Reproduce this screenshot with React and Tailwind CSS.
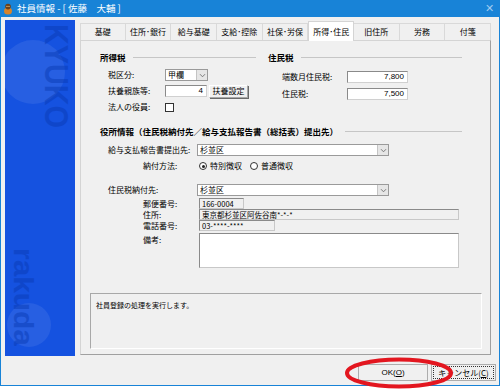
import React from 'react';

const Chevron = () => (
  <svg width="7" height="5" viewBox="0 0 7 5">
    <path d="M1 1.2 L3.5 3.8 L6 1.2" fill="none" stroke="#707070" strokeWidth="0.9" />
  </svg>
);

const Select = ({ className, value }) => (
  <div className={`flex h-[12px] bg-white border border-[#9a9a9a] ${className}`}>
    <div className="flex-1 pl-[2px] text-[8px] leading-[10px]">{value}</div>
    <div className="w-[11px] flex items-center justify-center bg-[#e6e6e6] border-l border-[#c4c4c4]">
      <Chevron />
    </div>
  </div>
);

const NumInput = ({ className, value }) => (
  <div className={`h-[12px] bg-white border border-[#8a8a8a] border-r-[#d0d0d0] border-b-[#d0d0d0] text-right pr-[3px] text-[8px] leading-[10px] font-['Liberation_Sans',sans-serif] ${className}`}>
    {value}
  </div>
);

const ReadInput = ({ className, value }) => (
  <div className={`h-[11px] bg-[#f0f0f0] border border-[#8a8a8a] border-r-[#c8c8c8] border-b-[#c8c8c8] pl-[2px] text-[7.5px] leading-[9px] ${className}`}>
    {value}
  </div>
);

const Header = ({ title, lineClass }) => (
  <div className="flex items-center h-[12px]">
    <span className="font-bold text-[8.5px] leading-none">{title}</span>
    <div className={`flex-1 ml-[7px] h-px bg-[#c6c6c6] ${lineClass}`} />
  </div>
);

const Radio = ({ checked, label }) => (
  <div className="flex items-center gap-[3px]">
    <span className="w-[8px] h-[8px] rounded-full border border-[#333] bg-white flex items-center justify-center">
      {checked && <span className="w-[3px] h-[3px] rounded-full bg-[#222]" />}
    </span>
    <span>{label}</span>
  </div>
);

const tabs = ['基礎', '住所･銀行', '給与基礎', '支給･控除', '社保･労保', '所得･住民', '旧住所', '労務', '付箋'];

const SidePanel = () => (
  <svg width="70" height="336" viewBox="0 0 70 336" className="block">
    <rect width="70" height="336" fill="#1552e0" />
    <circle cx="28" cy="52" r="32" fill="#ffffff" opacity="0.08" />
    <text
      transform="translate(40,4) rotate(90)"
      fontFamily="Liberation Sans"
      fontWeight="bold"
      fontSize="34"
      textLength="104"
      lengthAdjust="spacingAndGlyphs"
      fill="#0b3cb5"
      opacity="0.5"
    >
      KYUKO
    </text>
    <circle cx="24" cy="305" r="22" fill="#ffffff" opacity="0.08" />
    <text
      transform="translate(9,228) rotate(90)"
      fontFamily="Liberation Sans"
      fontWeight="bold"
      fontSize="28"
      textLength="98"
      lengthAdjust="spacingAndGlyphs"
      fill="#0b3cb5"
      opacity="0.5"
    >
      rakuda
    </text>
  </svg>
);

export default function App() {
  return (
    <div className="relative w-[500px] h-[390px] bg-white text-black font-['Noto_Sans_CJK_JP','Noto_Sans',sans-serif] overflow-hidden">
      <div className="w-[500px] h-[386px] bg-[#f0f0f0] border-x border-b border-[#1883d7] flex flex-col">
        {/* title bar */}
        <div className="h-[17px] bg-[#1883d7] flex items-center -mx-px">
          <svg width="10" height="12" viewBox="0 0 10 12" className="ml-[3px]">
            <ellipse cx="5" cy="8" rx="4" ry="3.6" fill="#d8842a" />
            <circle cx="5" cy="3.6" r="2.8" fill="#6b3f1a" />
            <circle cx="4" cy="3.4" r="0.6" fill="#f3d08a" />
            <circle cx="6" cy="3.4" r="0.6" fill="#f3d08a" />
          </svg>
          <span className="ml-[4px] text-[9.5px] leading-none text-white">社員情報 - [ 佐藤　大輔 ]</span>
          <span className="ml-auto mr-[6px] text-[11px] leading-none text-[#9fcaf0] font-['Liberation_Sans',sans-serif]">✕</span>
        </div>

        {/* body */}
        <div className="flex pt-[3px] pl-[4px]">
          <div className="w-[70px] h-[336px]">
            <SidePanel />
          </div>

          <div className="ml-[5px] w-[412px] flex flex-col">
            {/* tab strip */}
            <div className="h-[20px] w-[411px] grid grid-cols-9 items-end">
              {tabs.map((t) =>
                t === '所得･住民' ? (
                  <div
                    key={t}
                    className="relative z-10 -mb-px h-[20px] bg-white border-x border-t border-[#d4d4d4] flex items-center justify-center text-[8px] leading-none"
                  >
                    {t}
                  </div>
                ) : (
                  <div
                    key={t}
                    className="h-[17px] bg-[#f0f0f0] border-t border-r border-[#d9d9d9] first:border-l flex items-center justify-center text-[8px] leading-none"
                  >
                    {t}
                  </div>
                )
              )}
            </div>

            {/* tab page */}
            <div className="w-[411px] h-[315px] border border-[#d4d4d4] border-r-[#a0a0a0] border-b-[#a0a0a0] bg-[#f0f0f0] flex flex-col text-[8px] leading-none">
              <div className="pl-[19px] pt-[10px]">
                <div className="flex">
                  <div className="w-[168px]">
                    <Header title="所得税" lineClass="mr-[12px]" />
                    <div className="mt-[4px] pl-[8px]">
                      <div className="flex items-center h-[16px]">
                        <span className="w-[57px]">税区分:</span>
                        <Select className="w-[43px]" value="甲欄" />
                      </div>
                      <div className="flex items-center h-[16px]">
                        <span className="w-[57px]">扶養親族等:</span>
                        <NumInput className="w-[42px]" value="4" />
                        <button className="ml-[2px] w-[39px] h-[13px] bg-[#f0f0f0] border border-[#a8a8a8] border-t-white border-l-white shadow-[1px_1px_0_#6a6a6a] text-[8px] leading-none">
                          扶養設定
                        </button>
                      </div>
                      <div className="flex items-center h-[16px]">
                        <span className="w-[57px]">法人の役員:</span>
                        <span className="w-[9px] h-[9px] border border-[#333] bg-white" />
                      </div>
                    </div>
                  </div>

                  <div className="w-[194px]">
                    <Header title="住民税" />
                    <div className="mt-[5px] pl-[14px]">
                      <div className="flex items-center h-[17px]">
                        <span className="w-[65px]">端数月住民税:</span>
                        <NumInput className="w-[61px]" value="7,800" />
                      </div>
                      <div className="flex items-center h-[17px]">
                        <span className="w-[65px]">住民税:</span>
                        <NumInput className="w-[61px]" value="7,500" />
                      </div>
                    </div>
                  </div>
                </div>

                <div className="mt-[10px] w-[362px]">
                  <Header title="役所情報（住民税納付先／給与支払報告書（総括表）提出先）" />
                  <div className="mt-[5px]">
                    <div className="flex items-center h-[16px] pl-[8px]">
                      <span className="w-[89px]">給与支払報告書提出先:</span>
                      <Select className="w-[192px]" value="杉並区" />
                    </div>
                    <div className="flex items-center h-[16px] pl-[43px]">
                      <span className="w-[56px]">納付方法:</span>
                      <div className="flex items-center gap-[8px]">
                        <Radio checked label="特別徴収" />
                        <Radio label="普通徴収" />
                      </div>
                    </div>
                    <div className="mt-[8px] flex items-center h-[16px] pl-[8px]">
                      <span className="w-[89px]">住民税納付先:</span>
                      <Select className="w-[192px]" value="杉並区" />
                    </div>
                    <div className="flex items-center h-[11px] pl-[43px]">
                      <span className="w-[56px]">郵便番号:</span>
                      <ReadInput className="w-[45px]" value="166-0004" />
                    </div>
                    <div className="flex items-center h-[11px] pl-[43px]">
                      <span className="w-[56px]">住所:</span>
                      <ReadInput className="w-[260px]" value="東京都杉並区阿佐谷南*-*-*" />
                    </div>
                    <div className="flex items-center h-[11px] pl-[43px]">
                      <span className="w-[56px]">電話番号:</span>
                      <ReadInput className="w-[76px]" value="03-****-****" />
                    </div>
                    <div className="mt-[2px] flex pl-[43px]">
                      <span className="w-[56px] pt-[3px]">備考:</span>
                      <div className="w-[260px] h-[35px] bg-white border border-[#8a8a8a] border-r-[#c8c8c8] border-b-[#c8c8c8]" />
                    </div>
                  </div>
                </div>
              </div>

              <div className="mt-[25px] ml-[9px] w-[392px] h-[56px] border border-[#a8a8a8] border-r-white border-b-white bg-[#f0f0f0] pl-[5px] pt-[8px] text-[7px] leading-none">
                社員登録の処理を実行します。
              </div>
            </div>
          </div>
        </div>

        {/* footer buttons */}
        <div className="mt-[8px] flex justify-end pr-[3px] gap-[3px]">
          <button className="w-[70px] h-[17px] bg-[#f0f0f0] border border-[#adadad] text-[8px] leading-none font-['Liberation_Sans','Noto_Sans_CJK_JP',sans-serif]">
            OK(<span className="underline">O</span>)
          </button>
          <button className="w-[65px] h-[17px] bg-[#f0f0f0] border border-[#adadad] p-px">
            <div className="w-full h-full border border-dotted border-[#333] flex items-center justify-center text-[8px] leading-none">
              キャンセル(<span className="underline">C</span>)
            </div>
          </button>
        </div>
      </div>

      {/* red annotation ring */}
      <svg width="112" height="34" viewBox="0 0 112 34" className="absolute left-[343px] top-[356px] pointer-events-none">
        <ellipse cx="56" cy="17" rx="52" ry="13.5" fill="none" stroke="#e3161f" strokeWidth="4" />
      </svg>
    </div>
  );
}
